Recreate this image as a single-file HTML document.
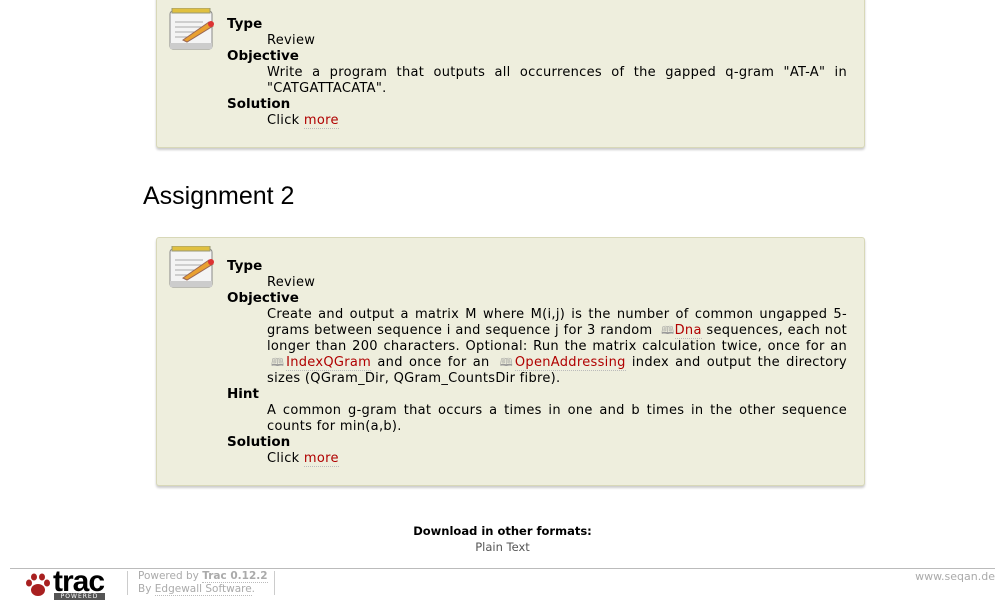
<!DOCTYPE html>
<html><head><style>
body{margin:0;background:#fff;font-family:"DejaVu Sans","Liberation Sans",sans-serif;font-size:13px;color:#000;width:1005px;height:614px;overflow:hidden;position:relative}
.box{position:absolute;left:156px;width:707px;background:#eeeedd;border:1px solid #d8d8b8;border-radius:3px;box-shadow:0 2px 2px #ccc}
.icon{position:absolute;left:12px;top:8px}
dl{position:absolute;left:70px;width:620px;margin:0;line-height:16px}
dt{font-weight:bold;font-size:13.5px}
dd{margin:0 0 0 40px;text-align:justify;letter-spacing:0.3px;position:relative;top:1px}
a{color:#b00000;text-decoration:none;border-bottom:1px dotted #bbb}
.wk{color:#999;font-size:11px;margin-left:4px}
h2{position:absolute;left:143px;top:182px;margin:0;font-family:"Liberation Sans",sans-serif;font-weight:normal;font-size:25px}
</style></head><body>
<svg width="0" height="0" style="position:absolute"><defs><g id="pad">
<rect x="1" y="3" width="42" height="38" rx="3" fill="#f4f4f4" stroke="#888"/>
<rect x="1" y="35" width="42" height="6" fill="#ccc"/>
<rect x="3" y="0" width="38" height="5" fill="#e0c040" stroke="#997"/>
<line x1="6" y1="14" x2="34" y2="14" stroke="#aaa"/><line x1="6" y1="19" x2="34" y2="19" stroke="#aaa"/><line x1="6" y1="24" x2="30" y2="24" stroke="#aaa"/><line x1="6" y1="29" x2="22" y2="29" stroke="#aaa"/>
<path d="M14 32 L40 14 L44 18 L18 34 Z" fill="#e9a030" stroke="#965"/>
<circle cx="42" cy="16" r="3" fill="#d33"/></g></defs></svg>
<div class="box" style="top:-5px;height:151px">
<svg class="icon" width="46" height="44" style="top:12px"><use href="#pad"/></svg>
<dl style="top:20px"><dt>Type</dt><dd>Review</dd><dt>Objective</dt><dd>Write a program that outputs all occurrences of the gapped q-gram "AT-A" in "CATGATTACATA".</dd><dt>Solution</dt><dd>Click <a>more</a></dd></dl>
</div>
<h2>Assignment 2</h2>
<div class="box" style="top:237px;height:247px">
<svg class="icon" width="46" height="44"><use href="#pad"/></svg>
<dl style="top:20px"><dt>Type</dt><dd>Review</dd><dt>Objective</dt><dd>Create and output a matrix M where M(i,j) is the number of common ungapped 5-grams between sequence i and sequence j for 3 random <span class="wk">&#128366;</span><a>Dna</a> sequences, each not longer than 200 characters. Optional: Run the matrix calculation twice, once for an <span class="wk">&#128366;</span><a>IndexQGram</a> and once for an <span class="wk">&#128366;</span><a>OpenAddressing</a> index and output the directory sizes (QGram_Dir, QGram_CountsDir fibre).</dd><dt>Hint</dt><dd>A common g-gram that occurs a times in one and b times in the other sequence counts for min(a,b).</dd><dt>Solution</dt><dd>Click <a>more</a></dd></dl>
</div>
<div style="position:absolute;top:523px;left:0;width:1005px;text-align:center;font-size:11.5px;line-height:16px"><b>Download in other formats:</b><br><span style="color:#555">Plain Text</span></div>
<div style="position:absolute;top:568px;left:10px;width:985px;border-top:1px solid #bbb"></div>
<div style="position:absolute;top:570px;left:24px;width:82px;height:32px">
<svg width="28" height="28" style="position:absolute;left:0;top:2px"><g fill="#a82020"><ellipse cx="14" cy="18" rx="7" ry="6"/><ellipse cx="5" cy="11" rx="3" ry="3.5"/><ellipse cx="10" cy="5" rx="3" ry="3.5"/><ellipse cx="18" cy="5" rx="3" ry="3.5"/><ellipse cx="23" cy="11" rx="3" ry="3.5"/></g></svg>
<div style="position:absolute;left:29px;top:-5px;font:bold 30px 'Liberation Sans',sans-serif;letter-spacing:-1px">trac</div>
<div style="position:absolute;left:30px;top:23px;width:51px;height:7px;background:#555;color:#fff;font-size:6px;line-height:7px;text-align:center;letter-spacing:1px">POWERED</div>
</div>
<div style="position:absolute;top:571px;left:127px;height:24px;border-left:1px solid #ccc"></div>
<div style="position:absolute;top:571px;left:274px;height:24px;border-left:1px solid #ccc"></div>
<div style="position:absolute;top:570px;left:138px;font-size:10.5px;line-height:13px;color:#aaa">Powered by <b style="border-bottom:1px dotted #bbb">Trac 0.12.2</b><br>By <span style="border-bottom:1px dotted #bbb">Edgewall Software</span>.</div>
<div style="position:absolute;top:570px;right:10px;font-size:11px;color:#aaa">www.seqan.de</div>
</body></html>
